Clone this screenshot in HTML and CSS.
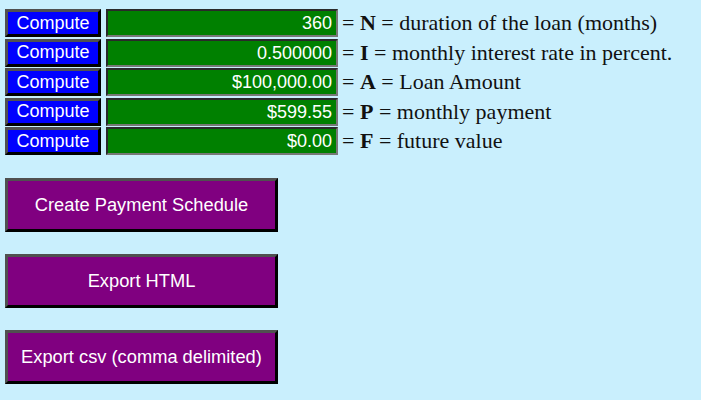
FILE: index.html
```html
<!DOCTYPE html>
<html lang="en">
<head>
    <meta charset="UTF-8">
    <meta name="viewport" content="width=device-width, initial-scale=1.0">
    <title>Loan Calculator</title>
    <link rel="stylesheet" href="styles.css">
</head>
<body>

<div class="calc">
    <button class="compute">Compute</button>
    <div class="field">360</div>
    <div class="label">= <b>N</b> = duration of the loan (months)</div>

    <button class="compute">Compute</button>
    <div class="field">0.500000</div>
    <div class="label">= <b>I</b> = monthly interest rate in percent.</div>

    <button class="compute">Compute</button>
    <div class="field">$100,000.00</div>
    <div class="label">= <b>A</b> = Loan Amount</div>

    <button class="compute">Compute</button>
    <div class="field">$599.55</div>
    <div class="label">= <b>P</b> = monthly payment</div>

    <button class="compute">Compute</button>
    <div class="field">$0.00</div>
    <div class="label">= <b>F</b> = future value</div>
</div>

<div class="actions">
    <button class="action">Create Payment Schedule</button>
    <button class="action">Export HTML</button>
    <button class="action">Export csv (comma delimited)</button>
</div>

</body>
</html>
```

FILE: styles.css
```css
body {
    margin: 0;
    padding: 9px 5px;
    background-color: #c9effd;
    font-family: "Liberation Sans", Arial, sans-serif;
}
.calc {
    display: grid;
    grid-template-columns: 96px 232px auto;
    grid-auto-rows: 28px;
    column-gap: 5px;
    row-gap: 1.6px;
    align-items: center;
}
.compute {
    height: 28px;
    margin: 0;
    padding: 0;
    background-color: #0000ff;
    color: white;
    font-family: "Liberation Sans", Arial, sans-serif;
    font-size: 18px;
    border: 3px solid;
    border-color: #505050 #000 #000 #505050;
}
.field {
    height: 28px;
    box-sizing: border-box;
    background-color: #008000;
    color: white;
    font-size: 18px;
    text-align: right;
    line-height: 24px;
    padding-right: 4px;
    border: 2px solid;
    border-color: #2a2a2a #777 #777 #2a2a2a;
}
.label {
    font-family: "Liberation Serif", "Times New Roman", serif;
    font-size: 22px;
    color: #111;
    margin-left: -1px;
    white-space: nowrap;
}
.actions {
    display: flex;
    flex-direction: column;
    align-items: flex-start;
    gap: 22px;
    margin-top: 23px;
}
.action {
    width: 273px;
    height: 54px;
    margin: 0;
    background-color: #800080;
    color: white;
    font-family: "Liberation Sans", Arial, sans-serif;
    font-size: 18.3px;
    border: 3px solid;
    border-color: #505050 #000 #000 #505050;
}
```
